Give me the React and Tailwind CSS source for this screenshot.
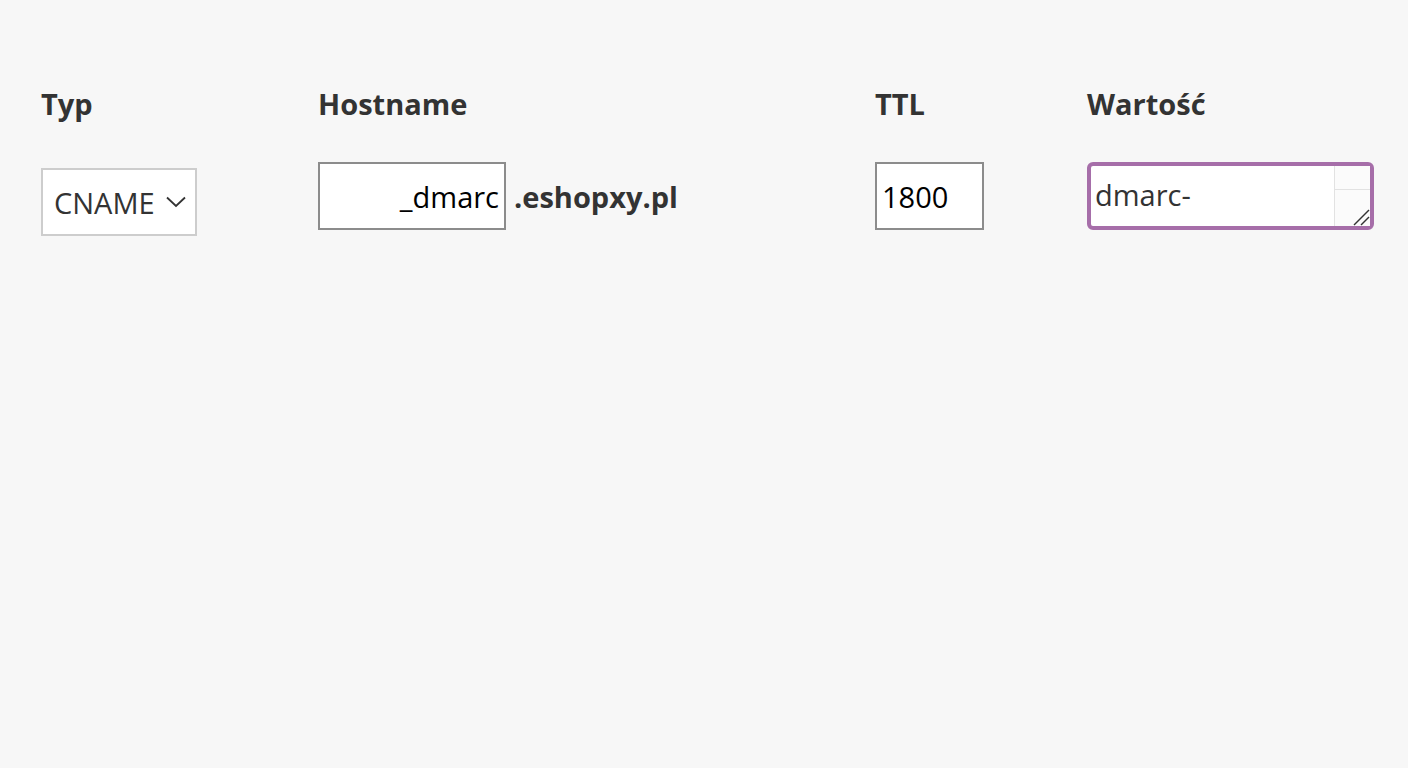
import React from 'react';

const font = { fontFamily: '"Open Sans", "Noto Sans", sans-serif' };

export default function App() {
  return (
    <div className="min-h-screen w-full bg-[#f7f7f7] text-[#333]" style={font}>
      <div className="flex pt-[84px] pl-[41px]">
        {/* Typ */}
        <div className="w-[277px] shrink-0">
          <h3 className="text-[29px] font-bold leading-[40px] mb-[44px]">Typ</h3>
          <div className="mt-[4px] w-[156px] h-[68px] border-2 border-[#cdcdcd] bg-white flex items-center justify-between pl-[11px] pr-[9px]">
            <span className="text-[29px] leading-none text-[#333]">CNAME</span>
            <svg width="20" height="12" viewBox="0 0 20 12" fill="none" stroke="#333" strokeWidth="1.8">
              <path d="M1 1.5 L10 10 L19 1.5" />
            </svg>
          </div>
        </div>

        {/* Hostname */}
        <div className="w-[557px] shrink-0">
          <h3 className="text-[29px] font-bold leading-[40px] mb-[38px]">Hostname</h3>
          <div className="flex items-center gap-[8px]">
            <div className="w-[188px] h-[68px] border-2 border-[#8c8c8c] bg-white flex items-center justify-end pr-[5px]">
              <span className="text-[29px] leading-none text-black">_dmarc</span>
            </div>
            <span className="text-[29px] font-bold leading-none text-[#333]">.eshopxy.pl</span>
          </div>
        </div>

        {/* TTL */}
        <div className="w-[212px] shrink-0">
          <h3 className="text-[29px] font-bold leading-[40px] mb-[38px]">TTL</h3>
          <div className="w-[109px] h-[68px] border-2 border-[#8c8c8c] bg-white flex items-center pl-[5px]">
            <span className="text-[29px] leading-none text-black">1800</span>
          </div>
        </div>

        {/* Wartość */}
        <div className="shrink-0">
          <h3 className="text-[29px] font-bold leading-[40px] mb-[38px]">Wartość</h3>
          <div className="relative w-[287px] h-[68px] border-[4px] border-[#a66ea9] rounded-[6px] bg-white flex">
            <div className="flex-1 flex items-center pl-[4px] pb-[4px]">
              <span className="text-[29px] leading-none text-[#333]">dmarc-</span>
            </div>
            <div className="w-[36px] flex flex-col border-l border-[#e2e2e2] bg-[#fbfbfb]">
              <div className="h-[24px] border-b border-[#e2e2e2]"></div>
              <div className="flex-1"></div>
            </div>
            <svg className="absolute right-[0px] bottom-[0px]" width="20" height="20" viewBox="0 0 20 20" fill="none" stroke="#333" strokeWidth="1.5">
              <path d="M19 4 L4 19" />
              <path d="M19 11 L11 19" />
            </svg>
          </div>
        </div>
      </div>
    </div>
  );
}
